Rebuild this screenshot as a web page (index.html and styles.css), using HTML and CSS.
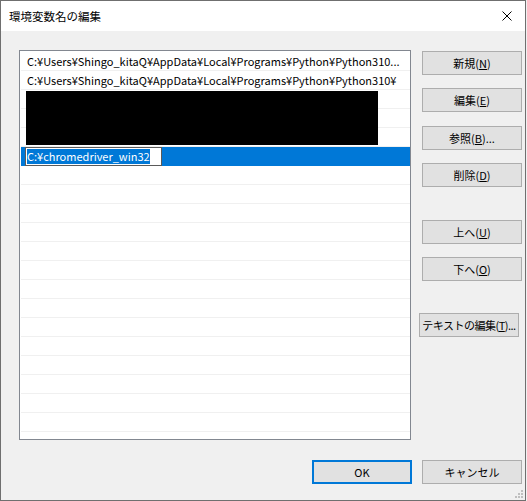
FILE: index.html
```html
<!DOCTYPE html>
<html lang="ja">
<head>
<meta charset="utf-8">
<title>環境変数名の編集</title>
<link rel="stylesheet" href="styles.css">
</head>
<body>
<div class="window">
  <div class="titlebar">
    <span class="title">環境変数名の編集</span>
    <svg class="close" width="10" height="10" viewBox="0 0 10 10">
      <path d="M0.5 0.5 L9.5 9.5 M9.5 0.5 L0.5 9.5" stroke="#000" stroke-width="1" fill="none"/>
    </svg>
  </div>
  <div class="content">
    <div class="list">
      <div class="row">C:¥Users¥Shingo_kitaQ¥AppData¥Local¥Programs¥Python¥Python310...</div>
      <div class="row">C:¥Users¥Shingo_kitaQ¥AppData¥Local¥Programs¥Python¥Python310¥</div>
      <div class="row"></div>
      <div class="row"></div>
      <div class="row"></div>
      <div class="row selected"><span class="edit"><span class="sel">C:¥chromedriver_win32</span></span></div>
      <div class="row"></div>
      <div class="row"></div>
      <div class="row"></div>
      <div class="row"></div>
      <div class="row"></div>
      <div class="row"></div>
      <div class="row"></div>
      <div class="row"></div>
      <div class="row"></div>
      <div class="row"></div>
      <div class="row"></div>
      <div class="row"></div>
      <div class="row"></div>
      <div class="row"></div>
      <div class="redact"></div>
    </div>
    <div class="side">
      <button class="btn">新規(<u>N</u>)</button>
      <button class="btn gap-s">編集(<u>E</u>)</button>
      <button class="btn gap-m">参照(<u>B</u>)...</button>
      <button class="btn gap-s">削除(<u>D</u>)</button>
      <button class="btn gap-l">上へ(<u>U</u>)</button>
      <button class="btn gap-s">下へ(<u>O</u>)</button>
      <button class="btn gap-l shift">テキストの編集(<u>T</u>)...</button>
    </div>
  </div>
  <div class="footer">
    <button class="btn default">OK</button>
    <button class="btn">キャンセル</button>
  </div>
  <svg class="grip" width="11" height="11" viewBox="0 0 11 11">
    <rect x="8" y="2" width="2" height="2" fill="#bfbfbf"/>
    <rect x="5" y="5" width="2" height="2" fill="#bfbfbf"/>
    <rect x="8" y="5" width="2" height="2" fill="#bfbfbf"/>
    <rect x="2" y="8" width="2" height="2" fill="#bfbfbf"/>
    <rect x="5" y="8" width="2" height="2" fill="#bfbfbf"/>
    <rect x="8" y="8" width="2" height="2" fill="#bfbfbf"/>
  </svg>
</div>
</body>
</html>
```

FILE: styles.css
```css
html, body {
  margin: 0;
  padding: 0;
  background: #f0f0f0;
}

body {
  font-family: "Noto Sans CJK JP", sans-serif;
  font-size: 11px;
  color: #000;
}

.window {
  position: relative;
  width: 526px;
  height: 501px;
  box-sizing: border-box;
  border: 1px solid #6f6f6f;
  background: #f0f0f0;
}

.titlebar {
  height: 30px;
  background: #fff;
  display: flex;
  align-items: center;
  justify-content: space-between;
  padding: 0 13px 0 8px;
}

.title {
  font-size: 11.5px;
  line-height: 16px;
}

.close {
  display: block;
}

.content {
  display: flex;
  align-items: flex-start;
  padding: 19px 0 0 18px;
  gap: 11px;
}

.list {
  position: relative;
  width: 392px;
  height: 390px;
  box-sizing: border-box;
  border: 1px solid #828790;
  background: #fff;
  padding: 1px 0 0 1px;
  overflow: hidden;
}

.row {
  height: 19px;
  box-sizing: border-box;
  border-bottom: 1px solid #f0f0f0;
  padding-left: 6px;
  padding-right: 2px;
  line-height: 18px;
  white-space: nowrap;
  overflow: hidden;
  text-overflow: ellipsis;
}

.row.selected {
  background: #0078d7;
  border-bottom-color: #0078d7;
  padding-left: 4px;
  overflow: visible;
  display: flex;
  align-items: flex-start;
}

.edit {
  display: flex;
  align-items: center;
  width: 137px;
  height: 19px;
  box-sizing: border-box;
  border: 1px solid #5a5a5a;
  background: #fff;
  padding-left: 1px;
  overflow: hidden;
}

.sel {
  background: #0078d7;
  color: #fff;
  line-height: 15px;
  height: 15px;
}

.redact {
  position: absolute;
  left: 6px;
  top: 40px;
  width: 352px;
  height: 54px;
  background: #000;
}

.side {
  display: flex;
  flex-direction: column;
  width: 100px;
  padding-top: 1px;
}

.btn {
  width: 100px;
  height: 24px;
  box-sizing: border-box;
  border: 1px solid #adadad;
  background: #e1e1e1;
  font-family: "Noto Sans CJK JP", sans-serif;
  font-size: 11px;
  color: #000;
  padding: 0;
  margin: 0;
  line-height: 20px;
  text-align: center;
  white-space: nowrap;
}

.btn u {
  text-underline-offset: 1px;
}

.gap-s { margin-top: 13px; }
.gap-m { margin-top: 14px; }
.gap-l { margin-top: 33px; }
.shift {
  margin-left: -3px;
  margin-top: 32px;
  letter-spacing: -0.5px;
}

.footer {
  display: flex;
  justify-content: flex-end;
  gap: 10px;
  padding-right: 3px;
  margin-top: 20px;
}

.btn.default {
  border: 2px solid #0078d7;
}

.grip {
  position: absolute;
  right: 1px;
  bottom: 1px;
}
```
